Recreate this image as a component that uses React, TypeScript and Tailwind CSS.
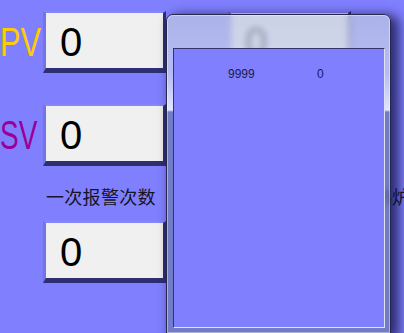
import type { ReactNode } from 'react';

function ValueBox({ value }: { value: string }) {
  return (
    <div className="flex h-[62px] items-center border-t-2 border-r-[3px] border-b-[5px] border-l-[3px] border-t-[#8686fa] border-r-[#2e2e72] border-b-[#2e2e72] border-l-[#7474ea] bg-[#f0f0f0] pt-[3px] pl-[14px]">
      <span className="text-[40px] leading-none text-black">{value}</span>
    </div>
  );
}

function Label({ children, className }: { children: ReactNode; className: string }) {
  return (
    <div className="flex h-[62px] items-center overflow-visible">
      <span className={`origin-left text-[40px] leading-none whitespace-nowrap ${className}`}>{children}</span>
    </div>
  );
}

export default function App() {
  return (
    <div className="relative h-[333px] w-[404px] overflow-hidden bg-[#8080ff] font-['Liberation_Sans',Arial,sans-serif]">
      {/* form behind the popup */}
      <div className="grid grid-cols-[43px_123px_62px_123px] pt-[11px]">
        <Label className="scale-x-[0.77] text-[#ffcc00]">PV</Label>
        <ValueBox value="0" />
        <div />
        <ValueBox value="0" />

        <div className="col-span-4 h-[31px]" />

        <Label className="scale-x-[0.7] text-[#990099]">SV</Label>
        <ValueBox value="0" />
        <div />
        <ValueBox value="0" />

        <div />
        <div className="h-[55px] pt-[21px] pl-[3px] text-[18px] leading-[18px] tracking-[0.3px] whitespace-nowrap text-[#141428] font-['Noto_Sans_CJK_SC',sans-serif]">
          一次报警次数
        </div>
        <div />
        <div className="h-[55px] pt-[21px] pl-[2px] text-[18px] leading-[18px] whitespace-nowrap text-[#141428] font-['Noto_Sans_CJK_SC',sans-serif]">
          第二段报警次数加热炉
        </div>

        <div />
        <ValueBox value="0" />
        <div />
        <ValueBox value="0" />
      </div>

      {/* glass popup with the list */}
      <div className="absolute top-[14px] left-[166px] h-[320px] w-[225px] rounded-t-[7px] border border-[#26264e] bg-[linear-gradient(180deg,rgba(188,198,225,0.72)_0px,rgba(200,208,238,0.76)_60px,rgba(236,240,252,0.9)_95px,rgba(104,122,168,0.66)_97px,rgba(104,122,168,0.66)_100%)] shadow-[6px_3px_12px_2px_rgba(15,15,60,0.75)] backdrop-blur-[3px]">
        <div className="h-full rounded-t-[6px] border border-white/40 pt-[32px] pr-[4px] pb-[4px] pl-[5px]">
          <div className="h-full border border-t-[#34346c] border-r-[#dfe3f8] border-b-[#dfe3f8] border-l-[#34346c] bg-[#8080ff]">
            <div className="flex pt-[18px] pl-[54px] text-[12px] leading-[14px] text-[#1a1a50]">
              <span className="w-[89px]">9999</span>
              <span>0</span>
            </div>
          </div>
        </div>
      </div>
    </div>
  );
}
